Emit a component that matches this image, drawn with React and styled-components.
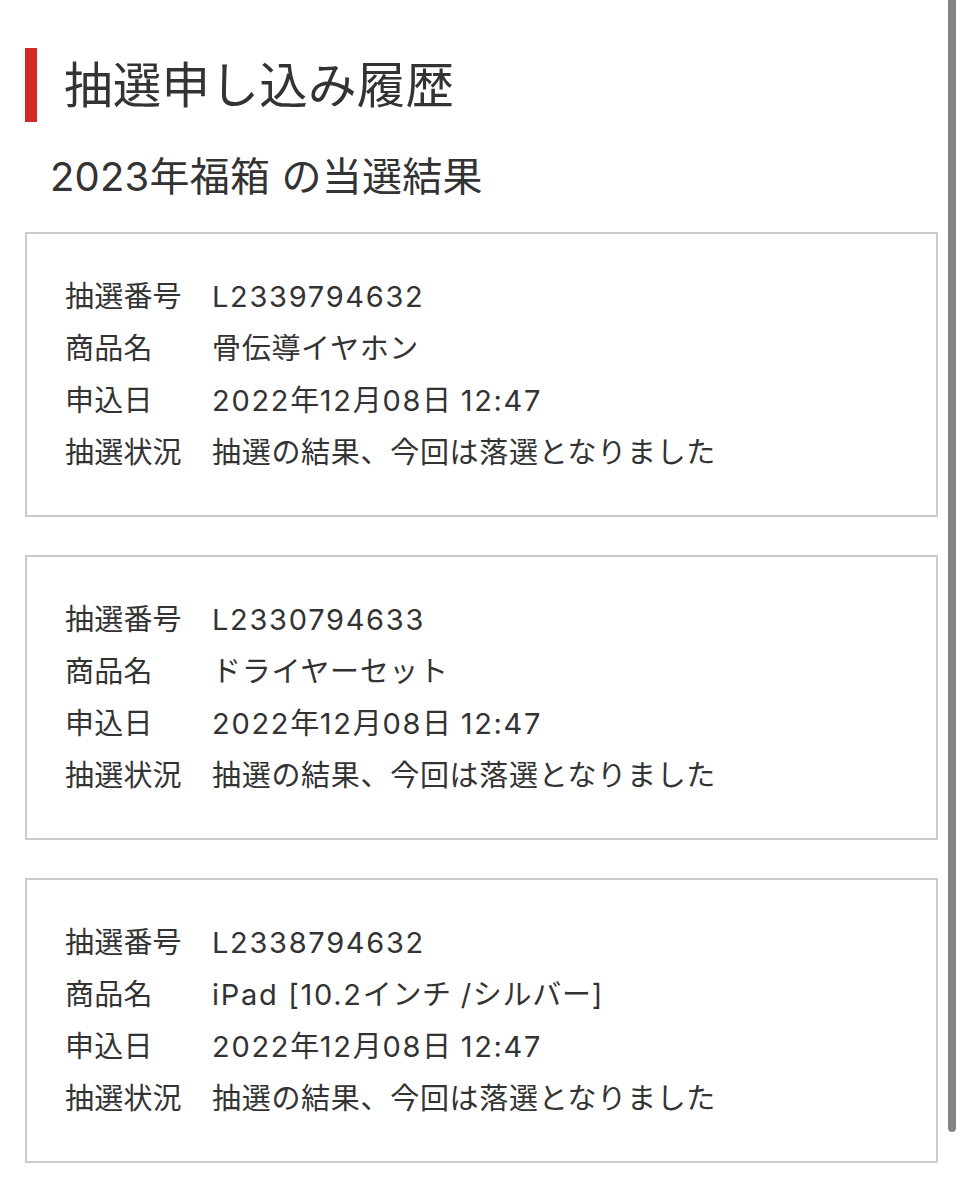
import React from "react";
import styled, { createGlobalStyle } from "styled-components";

const Global = createGlobalStyle`
  html, body { margin: 0; padding: 0; background: #fff; }
  body {
    font-family: Inter, "Noto Sans CJK JP", "Noto Sans", sans-serif;
    color: #333;
  }
`;

const Page = styled.div`
  padding: 48px 25px 40px 25px;
  width: 913px;
`;

const Heading = styled.h1`
  display: flex;
  align-items: center;
  gap: 27px;
  margin: 0;
  height: 74px;
  font-size: 48.5px;
  font-weight: 400;
  line-height: 74px;
  color: #333;
  letter-spacing: 0.3px;
`;

const HeadingText = styled.span`
  margin-top: 1px;
`;

const RedBar = styled.span`
  display: block;
  width: 12px;
  height: 74px;
  background: #d42a27;
  flex: none;
`;

const SubTitle = styled.h2`
  margin: 27px 0 27px 25px;
  font-size: 40px;
  font-weight: 400;
  line-height: 56px;
  color: #333;
  letter-spacing: 0.2px;
`;

const CardList = styled.div`
  display: flex;
  flex-direction: column;
  gap: 38px;
`;

const Card = styled.div`
  border: 2px solid #cbcbcb;
  padding: 37px 39px 36px 38px;
  background: #fff;
`;

const Row = styled.div`
  display: grid;
  grid-template-columns: 147px 1fr;
  font-size: 29px;
  line-height: 52px;
  height: 52px;
  color: #333;
  white-space: nowrap;
`;

const Label = styled.span`
  letter-spacing: 0.2px;
`;

const Value = styled.span`
  letter-spacing: 0.7px;
`;

const Latin = styled.span`
  letter-spacing: 1.7px;
`;

const ScrollThumb = styled.div`
  position: fixed;
  top: 0;
  left: 948px;
  width: 8px;
  height: 1132px;
  background: #858585;
  border-radius: 0 0 4px 4px;
`;

const entries = [
  { no: "L2339794632", name: "骨伝導イヤホン" },
  { no: "L2330794633", name: "ドライヤーセット" },
  { no: "L2338794632", name: "iPad [10.2インチ /シルバー]" },
];

function Mixed({ text }) {
  return text
    .split(/([\x21-\x7E][\x20-\x7E]*[\x21-\x7E]|[\x21-\x7E])/)
    .filter((p) => p !== "")
    .map((p, i) =>
      /^[\x20-\x7E]+$/.test(p) && /[\x21-\x7E]/.test(p) ? (
        <Latin key={i}>{p}</Latin>
      ) : (
        <React.Fragment key={i}>{p}</React.Fragment>
      )
    );
}

export default function App() {
  const rows = (e) => [
    ["抽選番号", e.no],
    ["商品名", e.name],
    ["申込日", "2022年12月08日 12:47"],
    ["抽選状況", "抽選の結果、今回は落選となりました"],
  ];
  return (
    <>
      <Global />
      <Page>
        <Heading>
          <RedBar />
          <HeadingText>抽選申し込み履歴</HeadingText>
        </Heading>
        <SubTitle>2023年福箱 の当選結果</SubTitle>
        <CardList>
          {entries.map((e) => (
            <Card key={e.no}>
              {rows(e).map(([label, value]) => (
                <Row key={label}>
                  <Label>{label}</Label>
                  <Value>
                    <Mixed text={value} />
                  </Value>
                </Row>
              ))}
            </Card>
          ))}
        </CardList>
      </Page>
      <ScrollThumb />
    </>
  );
}
